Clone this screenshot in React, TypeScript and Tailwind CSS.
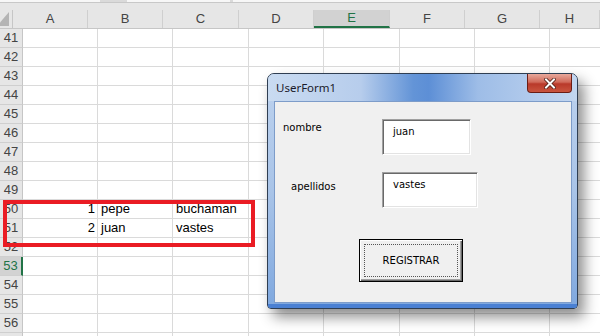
import React from 'react';

const cols = [
  { l: 'A', w: 'w-[75px]' },
  { l: 'B', w: 'w-[75px]' },
  { l: 'C', w: 'w-[76px]' },
  { l: 'D', w: 'w-[75px]' },
  { l: 'E', w: 'w-[76px]', sel: true },
  { l: 'F', w: 'w-[75px]' },
  { l: 'G', w: 'w-[75px]' },
  { l: 'H', w: 'w-[60px]' },
];

const rows = [41, 42, 43, 44, 45, 46, 47, 48, 49, 50, 51, 52, 53, 54, 55, 56, 57];

const data: Record<number, string[]> = {
  50: ['1', 'pepe', 'buchaman'],
  51: ['2', 'juan', 'vastes'],
};

const TextBox = ({ value, w }: { value: string; w: string }) => (
  <div className={`${w} h-[36px] bg-white border border-t-[#a0a0a0] border-l-[#a0a0a0] border-r-[#ffffff] border-b-[#ffffff] shadow-[inset_1px_1px_0_#696969,inset_-1px_-1px_0_#e3e3e3] pl-[10px] pt-[4px] text-[10px] text-black`}>
    {value}
  </div>
);

export default function App() {
  return (
    <div className="relative w-[600px] h-[336px] overflow-hidden bg-white font-['Liberation_Sans',Arial,sans-serif]">
      {/* top strip */}
      <div className="h-[10px] bg-[#e6e6e6]">
        <div className="flex h-[3px] border-b border-[#c8c8c8]">
          <div className="w-[100px] bg-[#f7f7f7]" />
          <div className="w-[27px] bg-[#dadada]" />
          <div className="w-[103px] bg-[#f7f7f7]" />
          <div className="w-[3px] bg-[#dadada]" />
          <div className="flex-1 bg-[#f7f7f7]" />
        </div>
      </div>

      {/* column headers */}
      <div className="flex h-[19px] border-b border-[#c6c6c6] bg-[#e6e6e6] text-[13px] text-[#444]">
        <div className="relative w-[23px] border-r border-[#c6c6c6]">
          <svg className="absolute right-[3px] bottom-[2px]" width="12" height="14" viewBox="0 0 12 14">
            <polygon points="12,0 12,14 0,14" fill="#b4b4b4" />
          </svg>
        </div>
        {cols.map((c) => (
          <div
            key={c.l}
            className={`${c.w} shrink-0 flex items-center justify-center border-r border-[#cfcfcf] ${
              c.sel ? 'bg-[#d2d2d2] text-[#217346] border-b-2 border-b-[#217346]' : ''
            }`}
          >
            {c.l}
          </div>
        ))}
      </div>

      {/* rows */}
      {rows.map((r) => (
        <div key={r} className="flex h-[19px] border-b border-[#dadada] text-[13px]">
          <div
            className={`w-[23px] shrink-0 flex items-center justify-center border-b border-[#cfcfcf] -mb-px ${
              r === 53
                ? 'bg-[#d2d2d2] text-[#217346] border-r-2 border-r-[#217346]'
                : 'bg-[#e6e6e6] text-[#444] border-r border-r-[#c6c6c6]'
            }`}
          >
            {r < 57 ? r : ''}
          </div>
          {cols.map((c, i) => (
            <div
              key={c.l}
              className={`${c.w} shrink-0 flex items-center border-r border-[#dadada] text-black ${
                i === 0 ? 'justify-end pr-[2px]' : 'pl-[3px]'
              }`}
            >
              {data[r]?.[i] ?? ''}
            </div>
          ))}
        </div>
      ))}

      {/* red annotation box */}
      <div className="absolute left-[3px] top-[200px] w-[252px] h-[47px] border-4 border-[#ea1c24]" />

      {/* UserForm1 window */}
      <div className="absolute left-[267px] top-[73px] w-[311px] h-[236px] flex flex-col rounded-t-[7px] rounded-b-[4px] border border-[#2f3e52] bg-[linear-gradient(180deg,#bdd2ee_0%,#a9c4e8_50%,#7fa8df_100%)] shadow-[6px_8px_14px_rgba(0,0,0,0.45)]">
        <div className="flex h-[27px] rounded-t-[6px] bg-[linear-gradient(90deg,#c9dbf1_0%,#b7cdec_30%,#6394d7_47%,#5d8fd6_52%,#9ebde7_68%,#c2d6f0_100%)]">
          <span className="self-center ml-[8px] mt-[1px] text-[11.5px] text-[#1b1b2b] font-['Noto_Sans',sans-serif]">
            UserForm1
          </span>
          <div className="ml-auto mr-[5px] w-[45px] h-[19px] rounded-b-[4px] border border-t-0 border-[#6b1d14] bg-[linear-gradient(180deg,#e8a99c_0%,#d06a5a_45%,#b9392a_55%,#c9553f_100%)] flex items-center justify-center">
            <svg width="12" height="11" viewBox="0 0 12 11">
              <path d="M2 1.5 L10 9.5 M10 1.5 L2 9.5" stroke="#4a1a12" strokeWidth="3.6" strokeLinecap="square" />
              <path d="M2 1.5 L10 9.5 M10 1.5 L2 9.5" stroke="#ffffff" strokeWidth="2" strokeLinecap="square" />
            </svg>
          </div>
        </div>
        <div className="flex-1 ml-[6px] mr-[5px] mb-[1px] border border-[#7d9cc9] bg-[#f0f0f0] pt-[17px] pl-[8px] font-['DejaVu_Sans',sans-serif] text-[10px] text-black">
          <div className="flex items-start">
            <div className="w-[99px] pt-[1px]">nombre</div>
            <TextBox value="juan" w="w-[89px]" />
          </div>
          <div className="flex items-start mt-[17px]">
            <div className="w-[99px] pl-[8px] pt-[7px]">apellidos</div>
            <TextBox value="vastes" w="w-[96px]" />
          </div>
          <div className="mt-[31px] ml-[76px] w-[104px] h-[43px] border border-black bg-[#f0f0f0] shadow-[inset_1px_1px_0_#ffffff,inset_-1px_-1px_0_#696969,inset_-2px_-2px_0_#a0a0a0] p-[4px]">
            <div className="w-full h-full border border-dotted border-[#555] flex items-center justify-center">
              REGISTRAR
            </div>
          </div>
        </div>
        <div className="h-[4px] bg-[#4a80d3] rounded-b-[3px]" />
      </div>
    </div>
  );
}
